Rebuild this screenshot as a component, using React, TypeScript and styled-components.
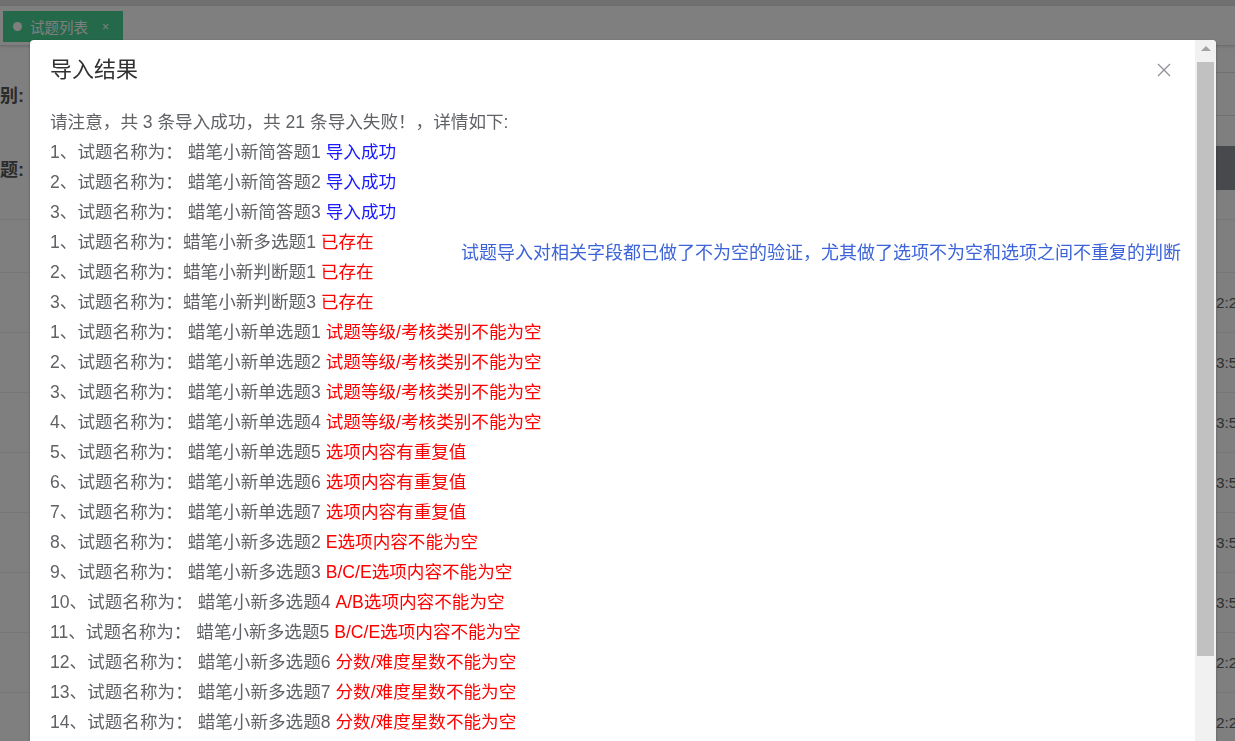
import styled, { createGlobalStyle } from "styled-components";

const GlobalStyle = createGlobalStyle`
    html, body {
        margin: 0;
        padding: 0;
    }
    body {
        width: 1235px;
        height: 741px;
        overflow: hidden;
        background: #fff;
        font-family: "Liberation Sans", "Noto Sans CJK SC", sans-serif;
    }
`;

// ---- page behind the dialog ----
const Page = styled.div`
    width: 1260px;
    height: 741px;
    overflow: hidden;
    background: #fff;
`;
const TopStrip = styled.div`
    height: 6px;
    background: #e0e0e0;
`;
const TagsBar = styled.div`
    height: 40px;
    display: flex;
    align-items: flex-start;
    padding: 5px 0 0 3px;
    box-sizing: border-box;
    border-bottom: 1px solid #d8dce5;
    box-shadow: 0 1px 3px 0 rgba(0, 0, 0, 0.12);
`;
const Tag = styled.div`
    display: flex;
    align-items: center;
    gap: 8px;
    width: 120px;
    height: 31px;
    box-sizing: border-box;
    padding-left: 10px;
    background: #4bd296;
    color: #fff;
    font-size: 14.5px;
`;
const TagDot = styled.span`
    width: 9px;
    height: 9px;
    border-radius: 50%;
    background: #fff;
`;
const TagClose = styled.span`
    margin-left: 6px;
    font-size: 12px;
`;
const Form = styled.div`
    display: flex;
    flex-direction: column;
    gap: 30px;
    padding-top: 26px;
`;
const FormRow = styled.div`
    display: flex;
    align-items: center;
    height: 44px;
`;
const Label = styled.div`
    width: 26px;
    font-size: 18px;
    font-weight: bold;
    color: #565656;
`;
const Input = styled.div`
    flex: 1;
    height: 44px;
    margin-left: 300px;
    box-sizing: border-box;
    border: 1px solid #dcdfe6;
    border-radius: 4px;
`;
const DarkButton = styled.div`
    margin-left: auto;
    width: 300px;
    height: 44px;
    background: #909399;
`;
const Table = styled.div`
    margin-top: 29px;
`;
const TableRow = styled.div<{ $h: number }>`
    height: ${(p) => p.$h}px;
    display: flex;
    align-items: center;
    justify-content: flex-end;
    border-top: 1px solid #ebeef5;
    box-sizing: border-box;
`;
const TimeCell = styled.div`
    width: 44px;
    font-size: 15.4px;
    color: #606266;
    white-space: nowrap;
`;

// ---- dialog ----
const DialogWrapper = styled.div`
    position: fixed;
    inset: 0;
    padding: 40px 0 0 30px;
    overflow: hidden;
`;
const Mask = styled.div`
    position: absolute;
    inset: 0;
    background: rgba(0, 0, 0, 0.5);
`;
const Dialog = styled.div`
    position: relative;
    display: flex;
    width: 1186px;
    height: 760px;
    background: #fff;
    border-radius: 4px;
    overflow: hidden;
    box-shadow: 0 1px 3px rgba(0, 0, 0, 0.3);
`;
const DialogMain = styled.div`
    flex: 1;
    min-width: 0;
`;
const Header = styled.div`
    display: flex;
    align-items: center;
    justify-content: space-between;
    padding: 17px 23px 0 20px;
`;
const Title = styled.span`
    font-size: 22px;
    line-height: 26px;
    color: #303133;
`;
const Body = styled.div`
    padding: 24px 20px 0 20px;
    font-size: 17.6px;
    line-height: 30px;
    color: #606266;
`;
const Columns = styled.div`
    display: flex;
`;
const List = styled.div`
    width: 411px;
    flex: none;
    white-space: nowrap;
`;
const Line = styled.div`
    white-space: nowrap;
`;
const Status = styled.span<{ $ok?: boolean }>`
    color: ${(p) => (p.$ok ? "#1a1aff" : "#ff0000")};
`;
const Note = styled.div`
    margin-top: 101px;
    font-size: 18px;
    color: #3c64d8;
    white-space: nowrap;
`;
const Scrollbar = styled.div`
    width: 21px;
    flex: none;
    background: #f1f1f1;
    display: flex;
    flex-direction: column;
    align-items: center;
`;
const ArrowUp = styled.div`
    height: 17px;
    display: flex;
    align-items: center;
    justify-content: center;
    &::before {
        content: "";
        border-left: 5px solid transparent;
        border-right: 5px solid transparent;
        border-bottom: 5px solid #a3a3a3;
    }
`;
const Thumb = styled.div`
    margin-top: 5px;
    width: 17px;
    height: 594px;
    background: #c1c1c1;
`;

type Item = { no: string; name: string; gap: boolean; status: string; ok?: boolean };

const items: Item[] = [
    { no: "1", name: "蜡笔小新简答题1", gap: true, status: "导入成功", ok: true },
    { no: "2", name: "蜡笔小新简答题2", gap: true, status: "导入成功", ok: true },
    { no: "3", name: "蜡笔小新简答题3", gap: true, status: "导入成功", ok: true },
    { no: "1", name: "蜡笔小新多选题1", gap: false, status: "已存在" },
    { no: "2", name: "蜡笔小新判断题1", gap: false, status: "已存在" },
    { no: "3", name: "蜡笔小新判断题3", gap: false, status: "已存在" },
    { no: "1", name: "蜡笔小新单选题1", gap: true, status: "试题等级/考核类别不能为空" },
    { no: "2", name: "蜡笔小新单选题2", gap: true, status: "试题等级/考核类别不能为空" },
    { no: "3", name: "蜡笔小新单选题3", gap: true, status: "试题等级/考核类别不能为空" },
    { no: "4", name: "蜡笔小新单选题4", gap: true, status: "试题等级/考核类别不能为空" },
    { no: "5", name: "蜡笔小新单选题5", gap: true, status: "选项内容有重复值" },
    { no: "6", name: "蜡笔小新单选题6", gap: true, status: "选项内容有重复值" },
    { no: "7", name: "蜡笔小新单选题7", gap: true, status: "选项内容有重复值" },
    { no: "8", name: "蜡笔小新多选题2", gap: true, status: "E选项内容不能为空" },
    { no: "9", name: "蜡笔小新多选题3", gap: true, status: "B/C/E选项内容不能为空" },
    { no: "10", name: "蜡笔小新多选题4", gap: true, status: "A/B选项内容不能为空" },
    { no: "11", name: "蜡笔小新多选题5", gap: true, status: "B/C/E选项内容不能为空" },
    { no: "12", name: "蜡笔小新多选题6", gap: true, status: "分数/难度星数不能为空" },
    { no: "13", name: "蜡笔小新多选题7", gap: true, status: "分数/难度星数不能为空" },
    { no: "14", name: "蜡笔小新多选题8", gap: true, status: "分数/难度星数不能为空" },
];

const times = ["2:2", "3:5", "3:5", "3:5", "3:5", "3:5", "2:2", "2:2"];

function CloseIcon() {
    return (
        <svg width="16" height="16" viewBox="0 0 16 16">
            <path d="M2 2L14 14M14 2L2 14" stroke="#909399" strokeWidth="1.4" fill="none" />
        </svg>
    );
}

function App() {
    return (
        <>
            <GlobalStyle />
            <Page>
                <TopStrip />
                <TagsBar>
                    <Tag>
                        <TagDot />
                        试题列表
                        <TagClose>×</TagClose>
                    </Tag>
                </TagsBar>
                <Form>
                    <FormRow>
                        <Label>别:</Label>
                        <Input />
                    </FormRow>
                    <FormRow>
                        <Label>题:</Label>
                        <DarkButton />
                    </FormRow>
                </Form>
                <Table>
                    <TableRow $h={53} />
                    {times.map((t, i) => (
                        <TableRow key={i} $h={60}>
                            <TimeCell>{t}</TimeCell>
                        </TableRow>
                    ))}
                </Table>
            </Page>
            <DialogWrapper>
                <Mask />
                <Dialog>
                    <DialogMain>
                        <Header>
                            <Title>导入结果</Title>
                            <CloseIcon />
                        </Header>
                        <Body>
                            <Line>请注意，共 3 条导入成功，共 21 条导入失败！，详情如下:</Line>
                            <Columns>
                                <List>
                                    {items.map((it, i) => (
                                        <Line key={i}>
                                            {it.no}、试题名称为：{it.gap ? " " : ""}
                                            {it.name} <Status $ok={it.ok}>{it.status}</Status>
                                        </Line>
                                    ))}
                                </List>
                                <Note>试题导入对相关字段都已做了不为空的验证，尤其做了选项不为空和选项之间不重复的判断</Note>
                            </Columns>
                        </Body>
                    </DialogMain>
                    <Scrollbar>
                        <ArrowUp />
                        <Thumb />
                    </Scrollbar>
                </Dialog>
            </DialogWrapper>
        </>
    );
}

export default App;
